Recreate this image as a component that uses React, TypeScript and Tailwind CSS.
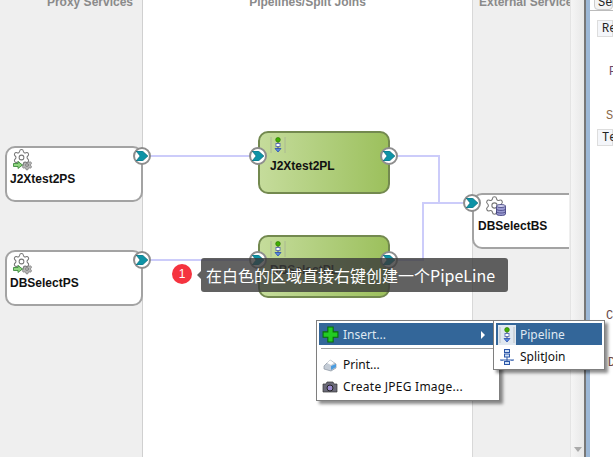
import { Settings } from 'lucide-react';

const sans = "font-['Liberation_Sans',Arial,sans-serif]";

function ProxyIcon() {
  return (
    <div className="relative ml-[3px] h-[22px] w-[19px]">
      <Settings className="absolute left-[8px] top-[9px] h-[12px] w-[12px] fill-[#b5b5b5] text-[#777]" strokeWidth={1.5} />
      <Settings className="absolute left-[-1px] top-[-2px] h-[19px] w-[19px] fill-white text-[#777]" strokeWidth={1.3} />
      <svg viewBox="0 0 10 8" className="absolute bottom-[3px] left-0 h-[8px] w-[10px]">
        <path d="M.5 2.500h4.500V.5L9.500 4 5 7.500V5.500H.5z" fill="#8fd67f" stroke="#2f7d2f" strokeWidth=".8" />
      </svg>
    </div>
  );
}

function DbIcon() {
  return (
    <div className="relative h-[19px] w-[20px]">
      <Settings className="absolute left-[-2px] top-[-2px] h-[21px] w-[21px] fill-white text-[#777]" strokeWidth={1.2} />
      <svg viewBox="0 0 10 12" className="absolute bottom-0 right-0 h-[12px] w-[10px]">
        <path d="M.5 2v8c0 2 9 2 9 0V2z" fill="#9a9ad0" stroke="#3a3a7a" strokeWidth=".8" />
        <ellipse cx="5" cy="2" rx="4.500" ry="1.500" fill="#d4d4f0" stroke="#3a3a7a" strokeWidth=".8" />
        <path d="M.5 5c0 2 9 2 9 0M.5 7.500c0 2 9 2 9 0" fill="none" stroke="#3a3a7a" strokeWidth=".7" />
      </svg>
    </div>
  );
}

function PipelineGlyph({ className = '' }: { className?: string }) {
  return (
    <svg viewBox="0 0 16 16" className={className}>
      <path d="M1 .5v15M15 .5v15" stroke="#999" strokeDasharray="1 1" fill="none" />
      <path d="M8 4v9" stroke="#555" />
      <circle cx="8" cy="2.800" r="2.300" fill="#3fb000" stroke="#2c7a00" strokeWidth=".7" />
      <rect x="6" y="6.500" width="4" height="3" fill="#fff" stroke="#4a5fb0" strokeWidth=".8" />
      <path d="M5 11.500h6L8 15z" fill="#5a8be0" stroke="#2a4fb0" strokeWidth=".8" />
    </svg>
  );
}

function Port({ x, y }: { x: number; y: number }) {
  return (
    <div
      className="absolute flex h-[18px] w-[18px] items-center justify-center rounded-full border-2 border-[#8d8d8d] bg-white"
      style={{ left: x - 9, top: y - 9 }}
    >
      <svg viewBox="0 0 12 10" className="h-[10px] w-[12px]">
        <path d="M0 0h6.500L12 5l-5.500 5H0l4-5z" fill="#0e93a6" stroke="#0a5a66" strokeWidth=".5" />
      </svg>
    </div>
  );
}

function ServiceNode({ name, top }: { name: string; top: string }) {
  return (
    <div className={`absolute left-[5px] h-[56px] w-[138px] rounded-[10px] border-2 border-[#a3a3a3] bg-white pl-[3px] pt-[2px] ${top}`}>
      <ProxyIcon />
      <div className={`${sans} text-[12px] font-bold leading-[15px] text-[#111]`}>{name}</div>
    </div>
  );
}

function PipelineNode({ name, top }: { name: string; top: string }) {
  return (
    <div className={`absolute left-[258px] h-[63px] w-[132px] rounded-[10px] border-2 border-[#73894f] bg-gradient-to-r from-[#c5dc9b] to-[#9cc05c] pl-[10px] pt-[4px] ${top}`}>
      <PipelineGlyph className="h-[16px] w-[16px]" />
      <div className={`${sans} mt-[6px] text-[12px] font-bold leading-[15px] text-[#111]`}>{name}</div>
    </div>
  );
}

export default function App() {
  return (
    <div className="relative flex h-[457px] w-[613px] overflow-hidden bg-white">
      {/* Lanes */}
      <div className={`${sans} h-full w-[143px] border-r border-[#d0d0d0] bg-[#efefef] pr-[9px] text-right text-[12px] font-bold leading-[15px] text-[#8a8a8a]`}>
        <div className="mt-[-5px]">Proxy Services</div>
      </div>
      <div className={`${sans} h-full w-[330px] border-r border-[#d8d8d8] bg-white text-center text-[12px] font-bold leading-[15px] text-[#8a8a8a]`}>
        <div className="mt-[-5px]">Pipelines/Split Joins</div>
      </div>
      <div className={`${sans} h-full w-[97px] overflow-hidden whitespace-nowrap bg-[#efefef] pl-[6px] text-[12px] font-bold leading-[15px] text-[#8a8a8a]`}>
        <div className="mt-[-5px]">External Services</div>
      </div>

      {/* Scrollbar */}
      <div className="relative h-full w-[14px] border-l border-[#e4e4e4] bg-gradient-to-r from-[#f5f5f5] to-[#e8e8e8]">
        <div className="absolute bottom-[5px] left-[3px] h-0 w-0 border-x-[4px] border-t-[5px] border-x-transparent border-t-[#aaa]" />
      </div>
      <div className="h-full w-[2px] bg-[#777]" />
      <div className="h-full w-[4px] bg-[#9db8d6]" />

      {/* Property pane */}
      <div className="flex h-full flex-1 flex-col overflow-hidden whitespace-nowrap bg-white font-['Liberation_Mono',monospace] text-[12px] leading-[14px] text-[#222]">
        <div className="h-[11px] border-b border-[#bbb] pl-[4px]">
          <div className="mt-[-5px] h-[15px] rounded-b-sm border border-[#ccc] bg-[#f4f4f4] pl-[3px]">Sec</div>
        </div>
        <div className="ml-[7px] mt-[9px] h-[17px] border border-[#ddd] bg-[#f4f6fa] pl-[4px] pt-[1px]">Re</div>
        <div className="mt-[28px] pl-[19px] text-[#6a4a6a]">P</div>
        <div className="mt-[30px] pl-[16px] text-[#8a6a4a]">Sy</div>
        <div className="ml-[7px] mt-[6px] h-[17px] border border-[#ddd] bg-[#f4f6fa] pl-[4px] pt-[1px]">Te</div>
        <div className="mt-[163px] pl-[16px] text-[#6a4a4a]">C</div>
        <div className="mt-[33px] pl-[18px] text-[#6a4a4a]">D</div>
      </div>

      {/* Wires */}
      <svg className="absolute left-0 top-0 h-[457px] w-[613px]" viewBox="0 0 613 457" fill="none" stroke="#ccccfa" strokeWidth="2">
        <path d="M150 156H250M397 156H439V203M150 260H250M397 260H423V203H463" />
      </svg>

      {/* Nodes */}
      <ServiceNode name="J2Xtest2PS" top="top-[146px]" />
      <ServiceNode name="DBSelectPS" top="top-[250px]" />
      <PipelineNode name="J2Xtest2PL" top="top-[131px]" />
      <PipelineNode name="DBSelectPL" top="top-[235px]" />

      <div className="absolute left-[472px] top-[193px] h-[56px] w-[97px] rounded-l-[10px] border-y-2 border-l-2 border-[#a3a3a3] bg-white pl-[4px] pt-[2px]">
        <div className="ml-[8px]"><DbIcon /></div>
        <div className={`${sans} mt-[3px] text-[12px] font-bold leading-[15px] text-[#111]`}>DBSelectBS</div>
      </div>

      <Port x={142} y={156} />
      <Port x={142} y={260} />
      <Port x={258} y={156} />
      <Port x={389} y={156} />
      <Port x={258} y={260} />
      <Port x={389} y={260} />
      <Port x={472} y={203} />

      {/* Annotation */}
      <div className={`${sans} absolute left-[172px] top-[264px] flex h-[20px] w-[20px] items-center justify-center rounded-full bg-[#f5333f] text-[12px] text-white`}>1</div>
      <div className="absolute left-[197px] top-[271px] h-0 w-0 border-y-[4px] border-r-[4px] border-y-transparent border-r-[#5f5f5f]" />
      <div className="absolute left-[201px] top-[258px] flex h-[34px] w-[307px] items-center whitespace-nowrap rounded-[3px] bg-[#3a3a3a]/80 pl-[5px] font-['Noto_Sans_CJK_SC','Noto_Sans',sans-serif] text-[16px] text-white">
        在白色的区域直接右键创建一个PipeLine
      </div>

      {/* Context menu */}
      <div className="absolute left-[316px] top-[320px] h-[81px] w-[184px] border border-[#7f7f7f] bg-white p-[2px] font-['Noto_Sans',sans-serif] text-[12px] text-[#111] shadow-[3px_3px_3px_rgba(0,0,0,0.45)]">
        <div className="flex h-[22px] items-center bg-[#336699] pl-[3px] pt-[1px] text-[#dfe8f2]">
          <svg viewBox="0 0 16 16" className="h-[17px] w-[17px]">
            <path d="M5.500 1h5v4.500H15v5h-4.500V15h-5v-4.500H1v-5h4.500z" fill="#22cc22" stroke="#0a6a0a" />
          </svg>
          <span className="ml-[4px] flex-1">Insert...</span>
          <div className="mr-[12px] h-0 w-0 border-y-[4px] border-l-[4px] border-y-transparent border-l-white" />
        </div>
        <div className="mx-[2px] mb-[5px] mt-[3px] h-px bg-[#a0a0a0]" />
        <div className="flex h-[22px] items-center pl-[3px]">
          <svg viewBox="0 0 16 16" className="h-[16px] w-[16px]">
            <path d="M2 9l6-6 6 4v4l-5 3-7-2z" fill="#c4ccd6" stroke="#8a93a0" strokeWidth=".7" />
            <path d="M5 6l3-3 4 3-3 2z" fill="#fff" />
            <path d="M9 9l5-2v3l-5 3z" fill="#4a9ce0" />
          </svg>
          <span className="ml-[5px]">Print...</span>
        </div>
        <div className="flex h-[22px] items-center pl-[3px]">
          <svg viewBox="0 0 16 16" className="h-[16px] w-[16px]">
            <path d="M1 5h3l1-2h6l1 2h3v8H1z" fill="#6a6a78" stroke="#333" strokeWidth=".7" />
            <circle cx="8" cy="9" r="3" fill="#9a8ad0" stroke="#222" />
          </svg>
          <span className="ml-[5px] tracking-[0.25px]">Create JPEG Image...</span>
        </div>
      </div>

      {/* Submenu */}
      <div className="absolute left-[493px] top-[320px] h-[50px] w-[112px] border border-[#7f7f7f] bg-white p-[2px] font-['Noto_Sans',sans-serif] text-[12px] text-[#111] shadow-[3px_3px_3px_rgba(0,0,0,0.45)]">
        <div className="flex h-[22px] items-center bg-[#336699] pl-[2px] pt-[1px] text-[#dfe8f2]">
          <div className="flex h-[20px] w-[18px] items-center justify-center bg-white/85">
            <PipelineGlyph className="h-[18px] w-[16px]" />
          </div>
          <span className="ml-[4px]">Pipeline</span>
        </div>
        <div className="flex h-[22px] items-center pl-[3px] pt-[1px]">
          <svg viewBox="0 0 16 16" className="h-[16px] w-[16px]" fill="#cfe0f5" stroke="#2a56a8">
            <rect x="5.500" y=".5" width="5" height="3" />
            <rect x="5.500" y="5" width="5" height="3" />
            <path d="M8 8v3M1 11h14M3 11v1M8 11v1M13 11v1" fill="none" />
            <rect x="5.500" y="12.500" width="5" height="3" />
          </svg>
          <span className="ml-[5px]">SplitJoin</span>
        </div>
      </div>
    </div>
  );
}
